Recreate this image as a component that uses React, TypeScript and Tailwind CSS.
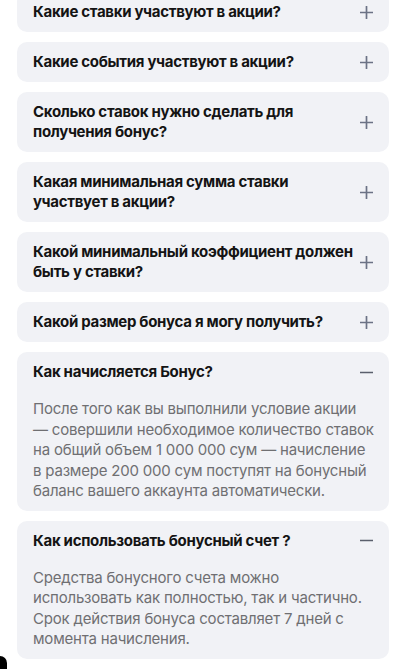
import React from "react";

type Item = { q: string[]; a?: string[] };

const items: Item[] = [
  { q: ["Какие ставки участвуют в акции?"] },
  { q: ["Какие события участвуют в акции?"] },
  { q: ["Сколько ставок нужно сделать для", "получения бонус?"] },
  { q: ["Какая минимальная сумма ставки", "участвует в акции?"] },
  { q: ["Какой минимальный коэффициент должен", "быть у ставки?"] },
  { q: ["Какой размер бонуса я могу получить?"] },
  {
    q: ["Как начисляется Бонус?"],
    a: [
      "После того как вы выполнили условие акции",
      "— совершили необходимое количество ставок",
      "на общий объем 1 000 000 сум — начисление",
      "в размере 200 000 сум поступят на бонусный",
      "баланс вашего аккаунта автоматически.",
    ],
  },
  {
    q: ["Как использовать бонусный счет ?"],
    a: [
      "Средства бонусного счета можно",
      "использовать как полностью, так и частично.",
      "Срок действия бонуса составляет 7 дней с",
      "момента начисления.",
    ],
  },
];

function Plus() {
  return (
    <svg width="13" height="13" viewBox="0 0 13 13" className="shrink-0">
      <path d="M6.5 0.5v12M0.5 6.5h12" stroke="#6b7285" strokeWidth="1.7" strokeLinecap="round" />
    </svg>
  );
}

function Minus() {
  return (
    <svg width="13" height="13" viewBox="0 0 13 13" className="shrink-0">
      <path d="M0.5 6.5h12" stroke="#5a5f6c" strokeWidth="1.7" strokeLinecap="round" />
    </svg>
  );
}

export default function App() {
  return (
    <div
      className="relative w-[400px] h-[669px] overflow-hidden bg-white"
      style={{ fontFamily: "Inter, 'Noto Sans', sans-serif" }}
    >
      <div className="flex flex-col gap-[10px] ml-[17px] mr-[11px] -mt-[8px]">
        {items.map((it, i) => (
          <div key={i} className="rounded-[10px] bg-[#f1f2f6]">
            <div className="flex items-center gap-[8px] pl-[16px] pr-[16px] py-[10px]">
              <div className="flex-1 min-w-0 text-[15px] leading-[20px] font-bold text-[#141414] tracking-[-0.3px]">
                {it.q.map((l, j) => (
                  <span key={j} className="block whitespace-nowrap">
                    {l}
                  </span>
                ))}
              </div>
              {it.a ? <Minus /> : <Plus />}
            </div>
            {it.a && (
              <div className="px-[16px] pt-[7px] pb-[9px] text-[15px] leading-[20.5px] text-[#6f6f72] tracking-[-0.2px]">
                {it.a.map((l, j) => (
                  <span key={j} className="block whitespace-nowrap">
                    {l}
                  </span>
                ))}
              </div>
            )}
          </div>
        ))}
      </div>
      <div className="absolute left-0 bottom-0 w-[7px] h-[13px] bg-black rounded-tr-[12px]" />
    </div>
  );
}
